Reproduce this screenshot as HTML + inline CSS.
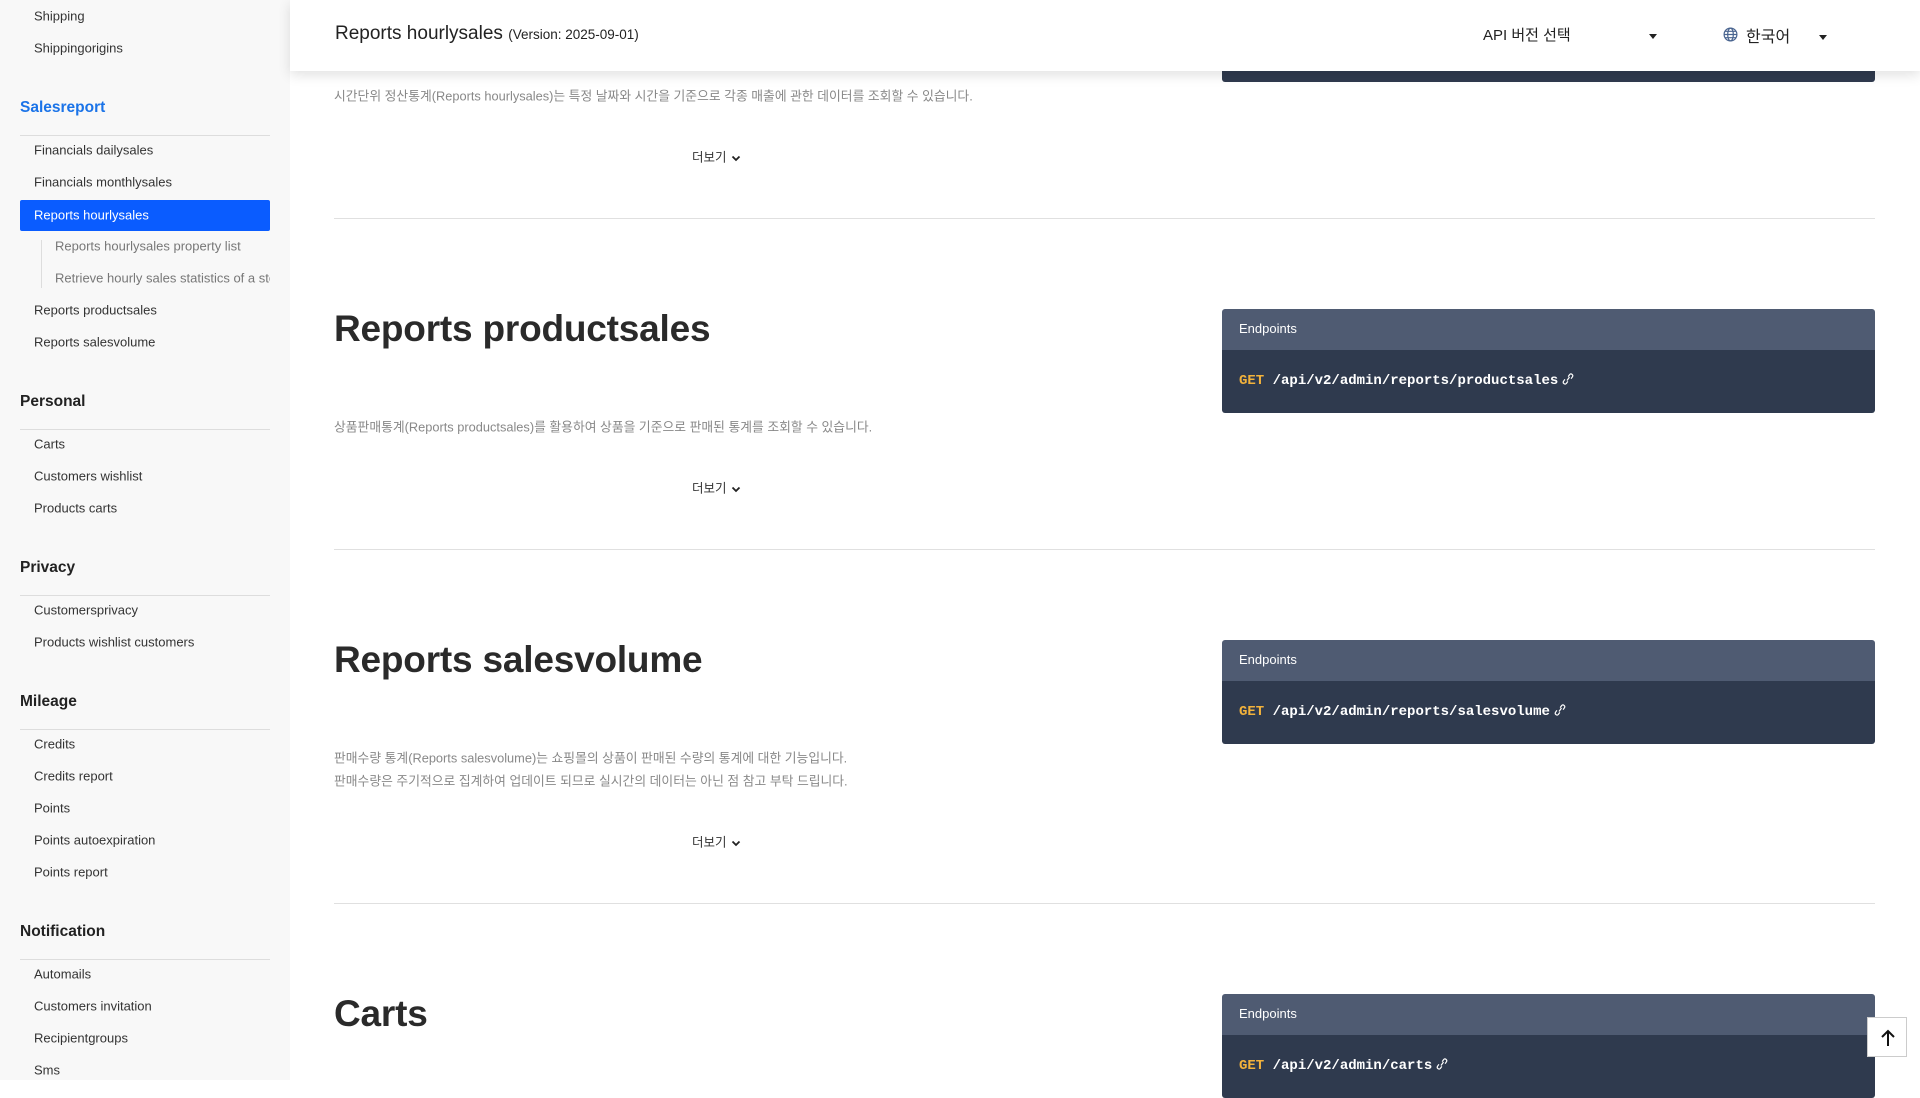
<!DOCTYPE html>
<html><head><meta charset="utf-8"><style>
*{margin:0;padding:0;box-sizing:border-box}
body{width:1920px;height:1080px;overflow:hidden;background:#fff;font-family:"Liberation Sans","Noto Sans CJK KR",sans-serif;position:relative;color:#222}
.sb{position:absolute;left:0;top:0;width:290px;height:1080px;background:#f8f8f8}
.a{position:absolute;white-space:nowrap}
.it{font-size:13px;color:#333;left:34px;transform:translateY(-50%)}
.sub{font-size:13px;color:#777;left:55px;transform:translateY(-50%);width:215px;overflow:hidden}
.hd{font-size:15.5px;font-weight:bold;color:#222;left:20px;transform:translateY(-50%)}
.ln{left:20px;width:250px;height:1px;background:#ddd}
.hdr{position:absolute;left:290px;top:0;width:1630px;height:71px;background:#fff;box-shadow:0 4px 12px rgba(0,0,0,.12);z-index:5}
.h2{font-size:37px;font-weight:bold;color:#2a2a2a;left:334px;transform:translateY(-50%);letter-spacing:-0.2px}
.desc{font-size:12.8px;color:#888;left:334px;transform:translateY(-50%)}
.more{font-size:12.5px;color:#333;left:692px;transform:translateY(-50%)}
.more svg{vertical-align:middle;margin-left:4px}
.hr{left:334px;width:1541px;height:1px;background:#e0e0e0}
.ep{position:absolute;left:1222px;width:653px;height:104px;border-radius:3px;overflow:hidden}
.ep .t{height:41px;background:#4f5b72;color:#fff;font-size:13px;padding:12px 0 0 17px}
.ep .b{height:63px;background:#2f3a4e;color:#fff;font-family:"Liberation Mono",monospace;font-weight:bold;font-size:14px;padding:22px 0 0 17px}
.ep .b svg{vertical-align:-2px;margin-left:4px}
.ep .g{color:#f3b23b}
</style></head><body>
<div class="sb">
<div class="a it" style="top:16px">Shipping</div>
<div class="a it" style="top:48px">Shippingorigins</div>
<div class="a hd" style="top:108px;color:#1a73e8">Salesreport</div>
<div class="a ln" style="top:135px"></div>
<div class="a it" style="top:150px">Financials dailysales</div>
<div class="a it" style="top:182px">Financials monthlysales</div>
<div class="a" style="left:20px;top:200px;width:250px;height:31px;background:#0a5cff;border-radius:2px"></div>
<div class="a it" style="top:215px;color:#fff">Reports hourlysales</div>
<div class="a" style="left:41px;top:240px;width:1px;height:48px;background:#ddd"></div>
<div class="a sub" style="top:246px">Reports hourlysales property list</div>
<div class="a sub" style="top:278px">Retrieve hourly sales statistics of a store</div>
<div class="a it" style="top:310px">Reports productsales</div>
<div class="a it" style="top:342px">Reports salesvolume</div>
<div class="a hd" style="top:402px">Personal</div>
<div class="a ln" style="top:429px"></div>
<div class="a it" style="top:444px">Carts</div>
<div class="a it" style="top:476px">Customers wishlist</div>
<div class="a it" style="top:508px">Products carts</div>
<div class="a hd" style="top:568px">Privacy</div>
<div class="a ln" style="top:595px"></div>
<div class="a it" style="top:610px">Customersprivacy</div>
<div class="a it" style="top:642px">Products wishlist customers</div>
<div class="a hd" style="top:702px">Mileage</div>
<div class="a ln" style="top:729px"></div>
<div class="a it" style="top:744px">Credits</div>
<div class="a it" style="top:776px">Credits report</div>
<div class="a it" style="top:808px">Points</div>
<div class="a it" style="top:840px">Points autoexpiration</div>
<div class="a it" style="top:872px">Points report</div>
<div class="a hd" style="top:932px">Notification</div>
<div class="a ln" style="top:959px"></div>
<div class="a it" style="top:974px">Automails</div>
<div class="a it" style="top:1006px">Customers invitation</div>
<div class="a it" style="top:1038px">Recipientgroups</div>
<div class="a it" style="top:1070px">Sms</div>
</div>

<div class="hdr">
<div class="a" style="left:45px;top:23px;font-size:19px;color:#222">Reports hourlysales <span style="font-size:13.5px">(Version: 2025-09-01)</span></div>
<div class="a" style="left:1193px;top:24px;font-size:15px;color:#222">API 버전 선택</div>
<div class="a" style="left:1359px;top:34px;border:4px solid transparent;border-top:5px solid #222"></div>
<svg class="a" style="left:1433px;top:27px" width="15" height="15" viewBox="0 0 16 16" fill="none" stroke="#4a6590" stroke-width="1.3"><circle cx="8" cy="8" r="6.8"/><ellipse cx="8" cy="8" rx="3" ry="6.8"/><path d="M1.2 8h13.6M2.2 4.6h11.6M2.2 11.4h11.6"/></svg>
<div class="a" style="left:1456px;top:23px;font-size:16px;color:#222">한국어</div>
<div class="a" style="left:1529px;top:35px;border:4px solid transparent;border-top:5px solid #222"></div>
</div>

<div class="ep" style="top:-22px;height:104px;z-index:1"><div class="t"></div><div class="b"></div></div>
<div class="a desc" style="top:95px">시간단위 정산통계(Reports hourlysales)는 특정 날짜와 시간을 기준으로 각종 매출에 관한 데이터를 조회할 수 있습니다.</div>
<div class="a more" style="top:156px">더보기<svg width="10" height="8" viewBox="0 0 10 8"><path d="M1.5 2l3.5 3.5L8.5 2" fill="none" stroke="#222" stroke-width="1.8"/></svg></div>
<div class="a hr" style="top:218px"></div>

<div class="a h2" style="top:329px">Reports productsales</div>
<div class="ep" style="top:309px"><div class="t">Endpoints</div><div class="b"><span class="g">GET</span> /api/v2/admin/reports/productsales<svg width="12" height="14" viewBox="0 0 12 14" fill="none" stroke="#fff" stroke-width="1.2"><path d="M5 8.5l2.5-3.5M6.2 4.6l1.4-2a1.8 1.8 0 0 1 2.9 2.1l-1.4 2M5.8 9.4l-1.4 2a1.8 1.8 0 0 1-2.9-2.1l1.4-2"/></svg></div></div>
<div class="a desc" style="top:426px">상품판매통계(Reports productsales)를 활용하여 상품을 기준으로 판매된 통계를 조회할 수 있습니다.</div>
<div class="a more" style="top:487px">더보기<svg width="10" height="8" viewBox="0 0 10 8"><path d="M1.5 2l3.5 3.5L8.5 2" fill="none" stroke="#222" stroke-width="1.8"/></svg></div>
<div class="a hr" style="top:549px"></div>

<div class="a h2" style="top:660px">Reports salesvolume</div>
<div class="ep" style="top:640px"><div class="t">Endpoints</div><div class="b"><span class="g">GET</span> /api/v2/admin/reports/salesvolume<svg width="12" height="14" viewBox="0 0 12 14" fill="none" stroke="#fff" stroke-width="1.2"><path d="M5 8.5l2.5-3.5M6.2 4.6l1.4-2a1.8 1.8 0 0 1 2.9 2.1l-1.4 2M5.8 9.4l-1.4 2a1.8 1.8 0 0 1-2.9-2.1l1.4-2"/></svg></div></div>
<div class="a desc" style="top:757px">판매수량 통계(Reports salesvolume)는 쇼핑몰의 상품이 판매된 수량의 통계에 대한 기능입니다.</div>
<div class="a desc" style="top:780px">판매수량은 주기적으로 집계하여 업데이트 되므로 실시간의 데이터는 아닌 점 참고 부탁 드립니다.</div>
<div class="a more" style="top:841px">더보기<svg width="10" height="8" viewBox="0 0 10 8"><path d="M1.5 2l3.5 3.5L8.5 2" fill="none" stroke="#222" stroke-width="1.8"/></svg></div>
<div class="a hr" style="top:903px"></div>

<div class="a h2" style="top:1014px">Carts</div>
<div class="ep" style="top:994px"><div class="t">Endpoints</div><div class="b"><span class="g">GET</span> /api/v2/admin/carts<svg width="12" height="14" viewBox="0 0 12 14" fill="none" stroke="#fff" stroke-width="1.2"><path d="M5 8.5l2.5-3.5M6.2 4.6l1.4-2a1.8 1.8 0 0 1 2.9 2.1l-1.4 2M5.8 9.4l-1.4 2a1.8 1.8 0 0 1-2.9-2.1l1.4-2"/></svg></div></div>

<div class="a" style="left:1867px;top:1017px;width:40px;height:40px;background:#fff;border:1px solid #ccc;z-index:6"><svg style="position:absolute;left:12px;top:11px" width="16" height="18" viewBox="0 0 16 18" fill="none" stroke="#111" stroke-width="2"><path d="M8 17V2M2 8l6-6 6 6"/></svg></div>
</body></html>
